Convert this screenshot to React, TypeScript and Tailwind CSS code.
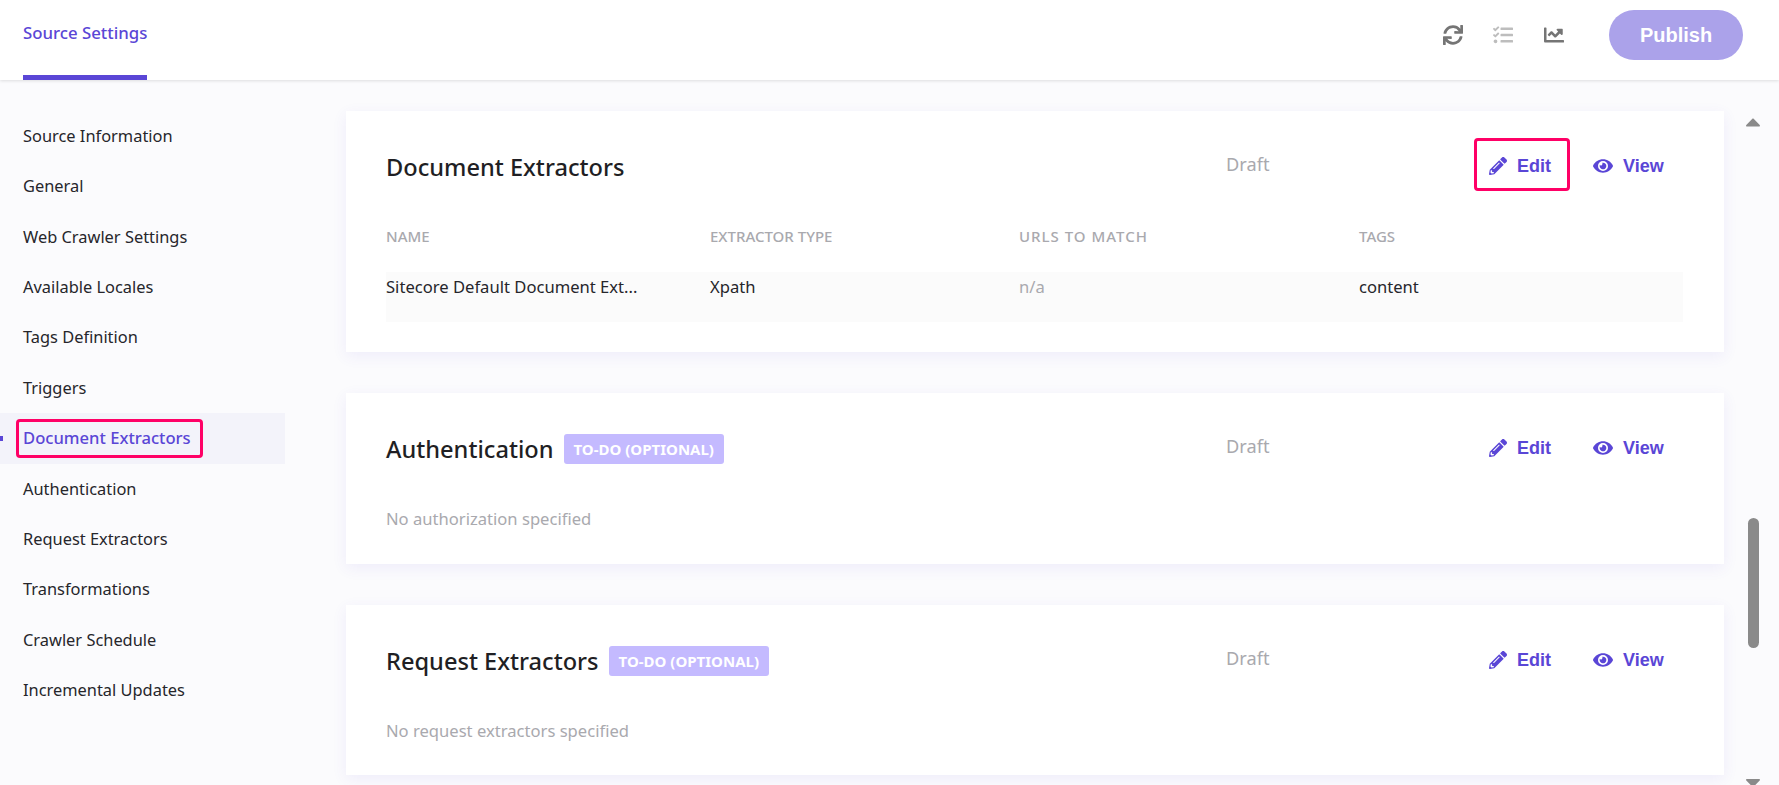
import { FaSync, FaTasks, FaChartLine, FaPencilAlt, FaEye, FaCaretUp, FaCaretDown } from "react-icons/fa";

const NAV = [
  "Source Information",
  "General",
  "Web Crawler Settings",
  "Available Locales",
  "Tags Definition",
  "Triggers",
  "Document Extractors",
  "Authentication",
  "Request Extractors",
  "Transformations",
  "Crawler Schedule",
  "Incremental Updates",
];

const CardHeader = ({ title, badge, boxed }: { title: string; badge?: boolean; boxed?: boolean }) => (
  <div className="grid grid-cols-[840px_248px_auto] items-center h-[52px]">
    <div className="flex items-center gap-[10px]">
      <h2 className="text-[23.6px] font-medium text-[#1f1f24] leading-8">{title}</h2>
      {badge && (
        <span className="h-[30px] px-[10px] rounded-[3px] bg-[#c4baff] text-white text-[15px] font-bold flex items-center">
          TO-DO (OPTIONAL)
        </span>
      )}
    </div>
    <span className="text-[18.2px] text-[#a9a9ae] -mt-[4px]">Draft</span>
    <div className="flex items-center -mt-[2px] font-['Liberation_Sans',sans-serif] font-bold text-[18px] text-[#5a46d6]">
      <button className={`flex items-center gap-[10px] w-[96px] h-[53px] -mt-[4px] pt-[4px] pl-3 rounded-[4px] border-[3.5px] ${boxed ? "border-[#ff0066]" : "border-transparent"}`}>
        <FaPencilAlt className="w-[18px] h-[18px]" />
        Edit
      </button>
      <button className="flex items-center gap-[10px] ml-[23px]">
        <FaEye className="w-[20px] h-[20px]" />
        View
      </button>
    </div>
  </div>
);

export default function App() {
  return (
    <div className="h-[785px] w-[1779px] flex flex-col overflow-hidden bg-[#fbfbfd] font-['Noto_Sans',sans-serif]">
      <header className="h-[80px] shrink-0 bg-white flex items-stretch justify-between pl-[23px] shadow-[0_1px_3px_rgba(0,0,0,0.12)] relative z-10">
        <div className="w-[124px] border-b-[5px] border-[#5a46d6] text-[16.8px] font-medium text-[#5a46d6] pt-[20px] whitespace-nowrap">
          Source Settings
        </div>
        <div className="flex items-center pr-[36px] pb-[10px]">
          <FaSync className="w-[20px] h-[20px] text-[#757575]" />
          <FaTasks className="w-[20px] h-[20px] text-[#bdbdbd] ml-[30px]" />
          <FaChartLine className="w-[20px] h-[20px] text-[#757575] ml-[31px]" />
          <button className="ml-[45px] w-[134px] h-[50px] rounded-full bg-[#aba2ea] text-white text-[20px] font-bold font-['Liberation_Sans',sans-serif]">
            Publish
          </button>
        </div>
      </header>

      <div className="flex-1 flex min-h-0">
        <nav className="w-[346px] shrink-0 pt-[31px]">
          {NAV.map((item) => {
            const active = item === "Document Extractors";
            return (
              <div
                key={item}
                className={`w-[285px] h-[50.4px] flex items-center pl-[23px] text-[16.4px] ${active ? "bg-[#f3f3fa] text-[#5a46d6] font-medium relative" : "text-[#26262b]"}`}
              >
                {active && <span className="absolute left-0 top-[23px] w-[3px] h-[5px] bg-[#5a46d6]" />}
                {active ? (
                  <span className="-ml-[7px] pl-[4px] pr-[9px] h-[39px] flex items-center rounded-[4px] border-[3.5px] border-[#ff0066] text-[16.6px]">{item}</span>
                ) : (
                  item
                )}
              </div>
            );
          })}
        </nav>

        <main className="w-[1378px] shrink-0 pt-[31px] flex flex-col gap-[41px]">
          <section className="h-[241px] shrink-0 bg-white pl-10 pr-[41px] pt-[30px] shadow-[0_4px_14px_rgba(90,70,214,0.08)]">
            <CardHeader title="Document Extractors" boxed />
            <div className="grid grid-cols-[324px_309px_340px_1fr] text-[15px] font-medium text-[#a9a9ae] mt-[33px] leading-5">
              <span>NAME</span>
              <span>EXTRACTOR TYPE</span>
              <span className="tracking-[1px]">URLS TO MATCH</span>
              <span>TAGS</span>
            </div>
            <div className="grid grid-cols-[324px_309px_340px_1fr] h-[50px] mt-[26px] items-start pt-[3px] bg-[#fbfbfb] text-[16.6px] text-[#26262b] leading-6">
              <span>Sitecore Default Document Ext...</span>
              <span>Xpath</span>
              <span className="text-[#a9a9ae]">n/a</span>
              <span>content</span>
            </div>
          </section>

          <section className="h-[171px] shrink-0 bg-white pl-10 pr-[41px] pt-[30px] shadow-[0_4px_14px_rgba(90,70,214,0.08)]">
            <CardHeader title="Authentication" badge />
            <p className="text-[16.6px] text-[#a9a9ae] mt-[32px] leading-6">No authorization specified</p>
          </section>

          <section className="h-[170px] shrink-0 bg-white pl-10 pr-[41px] pt-[30px] shadow-[0_4px_14px_rgba(90,70,214,0.08)]">
            <CardHeader title="Request Extractors" badge />
            <p className="text-[16.6px] text-[#a9a9ae] mt-[32px] leading-6">No request extractors specified</p>
          </section>
        </main>

        <div className="flex-1 flex flex-col items-center text-[#8a8a8a] pl-[3px]">
          <FaCaretUp className="w-[24px] h-[24px] mt-[30px] shrink-0" />
          <div className="w-[11px] h-[130px] shrink-0 rounded-full bg-[#8a8a8a] mt-[384px]" />
          <FaCaretDown className="w-[24px] h-[24px] mt-[122px] shrink-0" />
        </div>
      </div>
    </div>
  );
}
